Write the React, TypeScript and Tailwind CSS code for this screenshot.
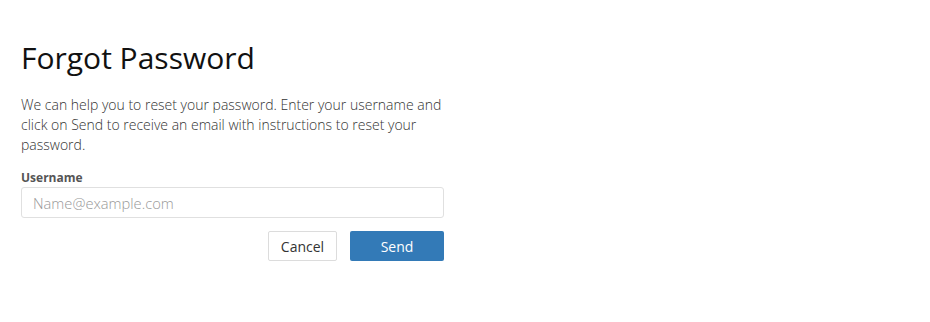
export default function App() {
  return (
    <div className="w-[930px] h-[322px] bg-white" style={{ fontFamily: '"Open Sans", sans-serif' }}>
      <div className="pl-[21px] pt-[38px] w-[444px]">
        <h1 className="text-[30px] leading-[40px] text-[#111] font-normal">Forgot Password</h1>
        <p className="mt-[17px] text-[14px] leading-[20px] text-[#333] font-light">
          We can help you to reset your password. Enter your username and click on Send to receive an email with instructions to reset your password.
        </p>
        <label className="block mt-[15px] text-[12px] leading-[16px] font-bold text-[#555]">Username</label>
        <input
          className="mt-[1px] block w-full h-[31px] px-[11px] border border-[#e0e0e0] rounded-[3px] text-[14.7px] text-[#333] font-light placeholder:text-[#999] outline-none"
          placeholder="Name@example.com"
        />
        <div className="mt-[13px] flex justify-end gap-[13px]">
          <button className="w-[69px] h-[30px] border border-[#dcdcdc] rounded-[2px] bg-white text-[14px] text-[#333]">Cancel</button>
          <button className="w-[94px] h-[30px] rounded-[2px] bg-[#337ab7] text-[14px] text-white">Send</button>
        </div>
      </div>
    </div>
  );
}
